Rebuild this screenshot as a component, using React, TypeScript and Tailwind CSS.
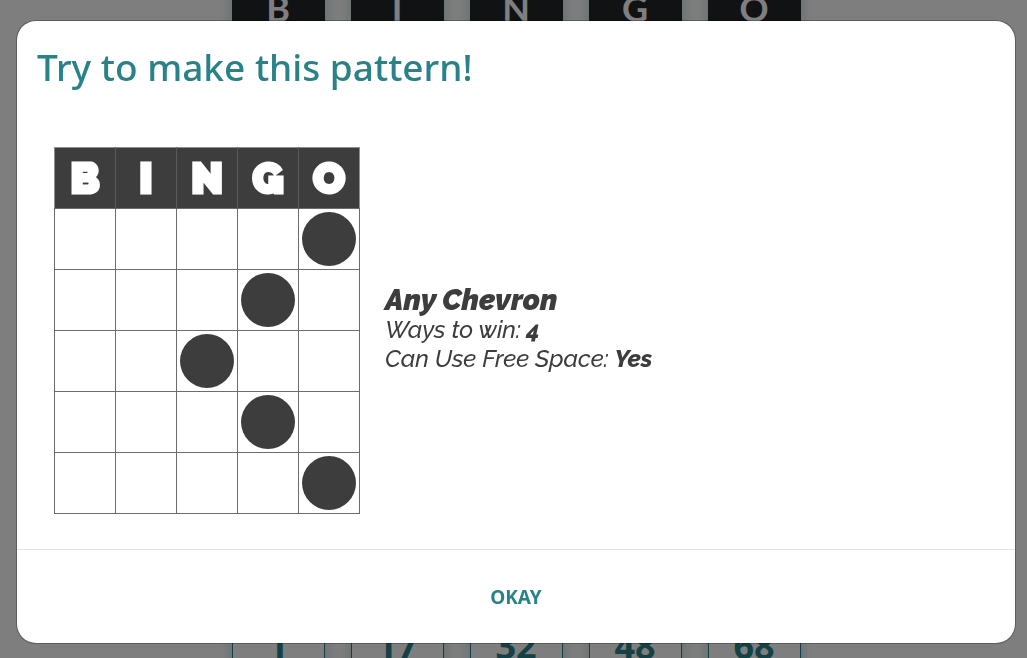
const letters = ["B", "I", "N", "G", "O"];
const lastRow = [1, 17, 32, 48, 68];
const pattern = [4, 3, 2, 3, 4];

function CardBehind() {
  return (
    <main
      aria-hidden="true"
      className="flex h-screen justify-center gap-[26px] overflow-hidden bg-[#fcfcfc] pl-[5px] text-[36px] font-bold"
    >
      {letters.map((letter, i) => (
        <div
          key={letter}
          className="-mt-8 -mb-8 flex w-[93px] shrink-0 flex-col justify-between text-center shadow-[0_0_12px_rgba(42,127,134,0.3)]"
        >
          <div className="bg-[#212529] pt-3 font-['Lato',sans-serif] leading-[56px] text-white">
            {letter}
          </div>
          <div className="h-[75px] border border-[#2a7f86] font-['Open_Sans',sans-serif] leading-[60px] text-[#2a8289]">
            {lastRow[i]}
          </div>
        </div>
      ))}
    </main>
  );
}

function PatternGrid() {
  return (
    <table className="w-[306px] shrink-0 table-fixed border-collapse border border-[#8f8f8f]">
      <thead>
        <tr className="h-[61px] bg-[#3d3d3d]">
          {letters.map((letter) => (
            <th
              key={letter}
              scope="col"
              className="border-r border-[#5a5a5a] p-0 pt-0.5 font-['Raleway','Lato',sans-serif] text-[42px] leading-none font-black text-white [-webkit-text-stroke:3px_white] last:border-r-0"
            >
              {letter}
            </th>
          ))}
        </tr>
      </thead>
      <tbody>
        {pattern.map((marked, row) => (
          <tr key={row} className="h-[61px]">
            {letters.map((letter, col) => (
              <td key={letter} className="border border-[#6c6c6c] p-0">
                {col === marked && (
                  <div className="mx-auto size-[54px] rounded-full bg-[#3d3d3d]" />
                )}
              </td>
            ))}
          </tr>
        ))}
      </tbody>
    </table>
  );
}

export default function App() {
  return (
    <div className="h-screen overflow-hidden">
      <CardBehind />
      <div className="fixed inset-0 bg-black/50 pt-5 pr-[11px] pb-3 pl-4">
        <div
          role="dialog"
          aria-modal="true"
          aria-labelledby="pattern-title"
          className="rounded-[20px] border border-black/25 bg-white bg-clip-padding font-['Noto_Sans',sans-serif] text-[#2a8289]"
        >
          <h1
            id="pattern-title"
            className="px-5 pt-4 text-[37px] leading-[60px] font-medium"
          >
            Try to make this pattern!
          </h1>
          <div className="flex items-center gap-[25px] px-[37px] pt-[50px] pb-[35px]">
            <PatternGrid />
            <div className="pb-0.5 font-['Raleway','Lato',sans-serif] text-[24px] leading-[29px] font-medium text-[#3d3d3d] italic">
              <h2 className="text-[29px] font-black">Any Chevron</h2>
              <p>
                Ways to win: <strong className="font-extrabold">4</strong>
              </p>
              <p>
                Can Use Free Space: <strong className="font-extrabold">Yes</strong>
              </p>
            </div>
          </div>
          <div className="flex justify-center border-t border-[#dee2e6] pt-[25px] pb-[23px]">
            <button type="button" className="px-4 py-2 text-[19px] leading-[29px] font-bold">
              OKAY
            </button>
          </div>
        </div>
      </div>
    </div>
  );
}
